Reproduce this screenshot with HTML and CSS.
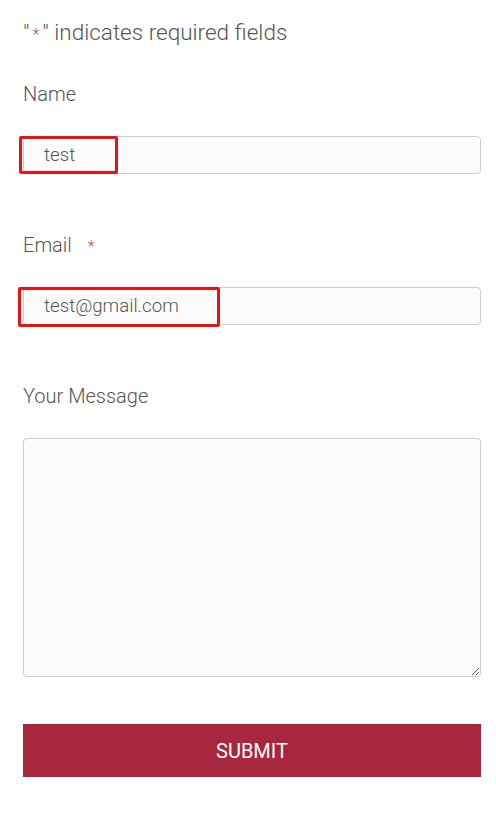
FILE: index.html
```html
<!DOCTYPE html>
<html lang="en">
<head>
    <meta charset="UTF-8">
    <title>Contact</title>
    <link rel="stylesheet" href="styles.css">
</head>
<body>
<form class="contact-form">
    <p class="required-note">"<span class="req">*</span>" indicates required fields</p>

    <div class="field">
        <label class="field-label" for="name">Name</label>
        <div class="input-wrap">
            <input class="field-input" type="text" id="name" value="test">
            <span class="mark mark-name"></span>
        </div>
    </div>

    <div class="field">
        <label class="field-label" for="email">Email <span class="req">*</span></label>
        <div class="input-wrap">
            <input class="field-input" type="email" id="email" value="test@gmail.com">
            <span class="mark mark-email"></span>
        </div>
    </div>

    <div class="field">
        <label class="field-label" for="message">Your Message</label>
        <textarea class="field-textarea" id="message"></textarea>
    </div>

    <button class="submit-btn" type="button">SUBMIT</button>
</form>
</body>
</html>
```

FILE: styles.css
```css
body {
    margin: 0;
    background: #ffffff;
    font-family: Roboto, "Liberation Sans", sans-serif;
    color: #555555;
}
.contact-form {
    padding: 16px 15px 40px 23px;
}
.required-note {
    margin: 0 0 33px;
    font-size: 22.5px;
    font-weight: 300;
    line-height: 32px;
}
.req {
    color: #b5514f;
    font-size: 16px;
    line-height: 1;
    margin: 0 3px;
}
.field {
    margin-bottom: 58px;
}
.field-label {
    display: block;
    margin-bottom: 29px;
    font-size: 20px;
    font-weight: 300;
    line-height: 26px;
}
.field-label .req {
    margin-left: 11px;
}
.input-wrap {
    position: relative;
}
.field-input,
.field-textarea {
    display: block;
    box-sizing: border-box;
    width: 100%;
    border: 1px solid #cccccc;
    border-radius: 4px;
    background: #fcfcfc;
    font-family: inherit;
    font-size: 18.7px;
    font-weight: 300;
    color: #555555;
}
.field-input {
    height: 38px;
    padding: 0 20px;
}
.field-textarea {
    height: 239px;
    resize: vertical;
}
.field:last-of-type {
    margin-bottom: 47px;
}
/* highlight boxes drawn over the filled inputs */
.mark {
    position: absolute;
    border: 3px solid #ee1111;
    border-radius: 2px;
    pointer-events: none;
}
.mark-name {
    left: -4px;
    top: 0;
    width: 93px;
    height: 32px;
}
.mark-email {
    left: -5px;
    top: 0;
    width: 196px;
    height: 34px;
}
.submit-btn {
    display: block;
    width: 100%;
    height: 53px;
    border: 0;
    background: #a8263e;
    color: #ffffff;
    font-family: inherit;
    font-size: 20px;
    font-weight: 400;
    cursor: pointer;
}
```
